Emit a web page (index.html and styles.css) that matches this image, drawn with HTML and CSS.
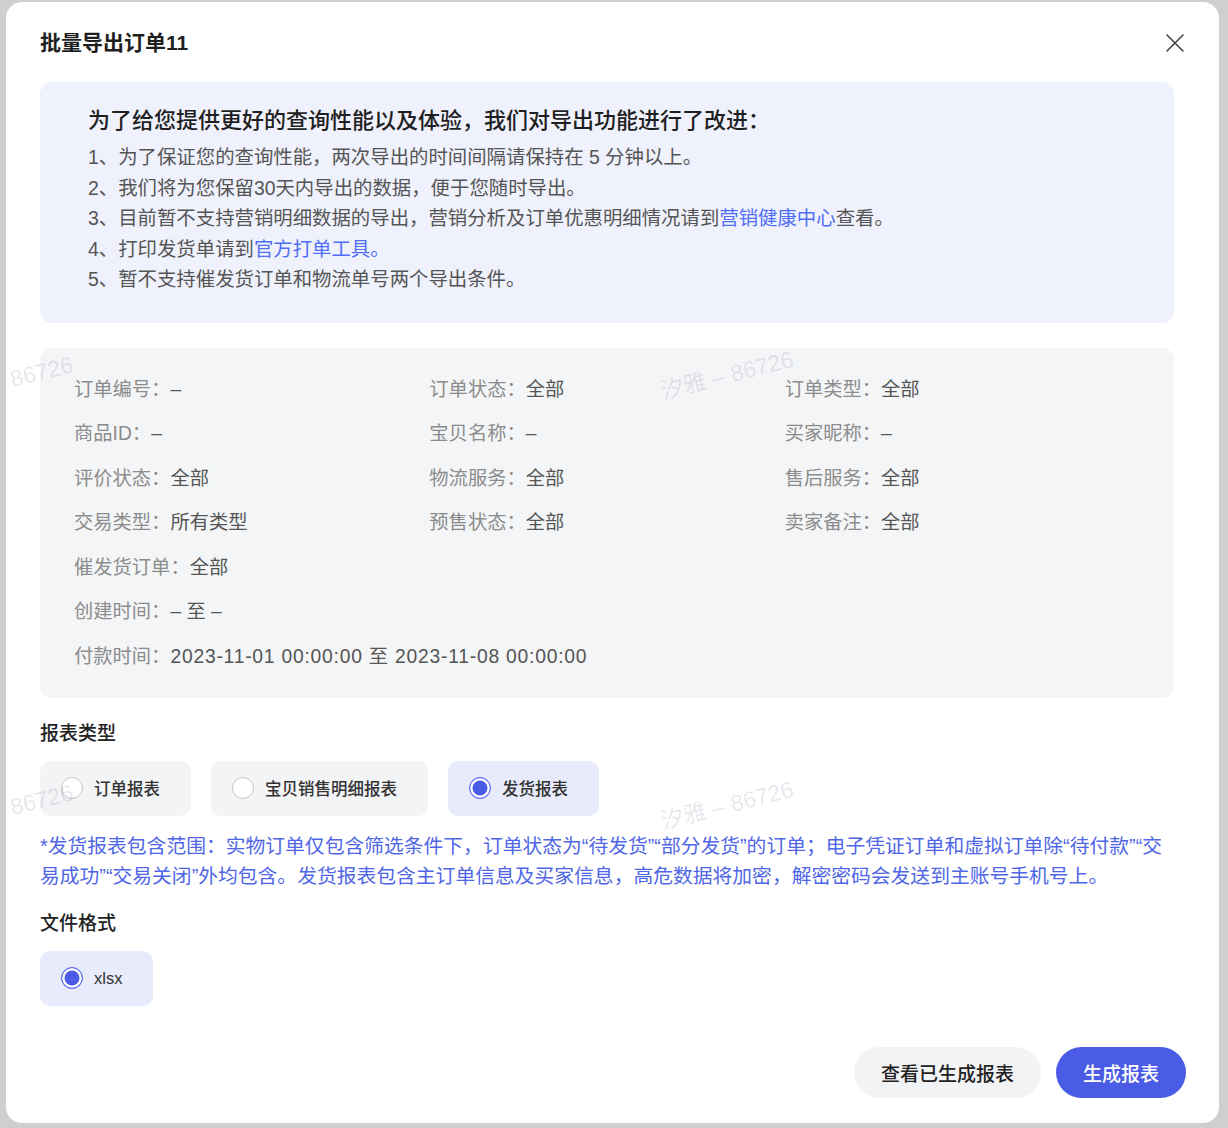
FILE: index.html
```html
<!DOCTYPE html>
<html lang="zh-CN">
<head>
  <meta charset="UTF-8" />
  <title>批量导出订单</title>
  <link rel="stylesheet" href="styles.css">
</head>
<body>
  <div class="modal">

    <!-- Header -->
    <div class="modal-head">
      <div class="modal-title">批量导出订单11</div>
      <span class="close-btn" aria-label="关闭">
        <svg width="20" height="20" viewBox="0 0 20 20">
          <path d="M2 2 L18 18 M18 2 L2 18" stroke="#444" stroke-width="1.6" stroke-linecap="round" fill="none" />
        </svg>
      </span>
    </div>

    <div class="modal-body">
      <!-- Notice -->
      <div class="notice">
        <div class="notice-title">为了给您提供更好的查询性能以及体验，我们对导出功能进行了改进：</div>
        <ul class="notice-list">
          <li>1、为了保证您的查询性能，两次导出的时间间隔请保持在 5 分钟以上。</li>
          <li>2、我们将为您保留30天内导出的数据，便于您随时导出。</li>
          <li>3、目前暂不支持营销明细数据的导出，营销分析及订单优惠明细情况请到<a class="link">营销健康中心</a>查看。</li>
          <li>4、打印发货单请到<a class="link">官方打单工具。</a></li>
          <li>5、暂不支持催发货订单和物流单号两个导出条件。</li>
        </ul>
      </div>

      <!-- Current filters -->
      <div class="filters">
        <div class="f"><span class="k">订单编号：</span><span class="v">–</span></div>
        <div class="f"><span class="k">订单状态：</span><span class="v">全部</span></div>
        <div class="f"><span class="k">订单类型：</span><span class="v">全部</span></div>
        <div class="f"><span class="k">商品ID：</span><span class="v">–</span></div>
        <div class="f"><span class="k">宝贝名称：</span><span class="v">–</span></div>
        <div class="f"><span class="k">买家昵称：</span><span class="v">–</span></div>
        <div class="f"><span class="k">评价状态：</span><span class="v">全部</span></div>
        <div class="f"><span class="k">物流服务：</span><span class="v">全部</span></div>
        <div class="f"><span class="k">售后服务：</span><span class="v">全部</span></div>
        <div class="f"><span class="k">交易类型：</span><span class="v">所有类型</span></div>
        <div class="f"><span class="k">预售状态：</span><span class="v">全部</span></div>
        <div class="f"><span class="k">卖家备注：</span><span class="v">全部</span></div>
        <div class="f wide"><span class="k">催发货订单：</span><span class="v">全部</span></div>
        <div class="f wide"><span class="k">创建时间：</span><span class="v">– 至 –</span></div>
        <div class="f wide"><span class="k">付款时间：</span><span class="v num">2023-11-01 00:00:00 至 2023-11-08 00:00:00</span></div>
      </div>

      <!-- Report type -->
      <div class="section-label">报表类型</div>
      <div class="options">
        <div class="option"><span class="radio"></span>订单报表</div>
        <div class="option"><span class="radio"></span>宝贝销售明细报表</div>
        <div class="option selected"><span class="radio on"></span>发货报表</div>
      </div>
      <p class="tip">*发货报表包含范围：实物订单仅包含筛选条件下，订单状态为“待发货”“部分发货”的订单；电子凭证订单和虚拟订单除“待付款”“交易成功”“交易关闭”外均包含。发货报表包含主订单信息及买家信息，高危数据将加密，解密密码会发送到主账号手机号上。</p>

      <!-- File format -->
      <div class="section-label fmt">文件格式</div>
      <div class="options">
        <div class="option selected"><span class="radio on"></span>xlsx</div>
      </div>
    </div>

    <!-- Footer -->
    <div class="modal-foot">
      <button class="btn">查看已生成报表</button>
      <button class="btn primary">生成报表</button>
    </div>

    <!-- Watermark -->
    <span class="wm" style="left: 8px; top: 364px;">86726</span>
    <span class="wm" style="left: 659px; top: 370px;">汐雅 – 86726</span>
    <span class="wm" style="left: 8px; top: 792px;">86726</span>
    <span class="wm" style="left: 659px; top: 800px;">汐雅 – 86726</span>
  </div>
</body>
</html>
```

FILE: styles.css
```css
body {
  margin: 0;
  padding: 2px 9px 5px 6px;
  background: #cfcfd2;
  font-family: "Liberation Sans", "Noto Sans CJK SC", sans-serif;
  color: #333;
}

.modal {
  position: relative;
  width: 1213px;
  height: 1121px;
  background: #fff;
  border-radius: 16px;
  display: flex;
  flex-direction: column;
  overflow: hidden;
}

/* Header */
.modal-head {
  display: flex;
  justify-content: space-between;
  align-items: center;
  padding: 28px 34px 0 34px;
}

.modal-title {
  font-size: 21px;
  line-height: 26px;
  font-weight: 600;
  color: #1f1f1f;
}

.close-btn {
  display: flex;
  width: 20px;
  height: 20px;
}

.modal-body {
  flex: 1;
  padding: 26px 45px 0 34px;
}

/* Notice box */
.notice {
  background: #eff1fc;
  border-radius: 12px;
  padding: 24px 48px 28px;
}

.notice-title {
  font-size: 22px;
  line-height: 30px;
  font-weight: 500;
  color: #1f1f1f;
}

.notice-list {
  list-style: none;
  margin: 6px 0 0;
  padding: 0;
  font-size: 19.4px;
  line-height: 30.5px;
  color: #555;
}

.link {
  color: #4f6ef5;
  cursor: pointer;
}

/* Filters */
.filters {
  margin-top: 25px;
  background: #f4f5f7;
  border-radius: 12px;
  padding: 29px 34px 28px;
  display: grid;
  grid-template-columns: repeat(3, 1fr);
  row-gap: 18.5px;
  font-size: 19.3px;
  line-height: 26px;
}

.f.wide {
  grid-column: 1 / -1;
}

.k {
  color: #8c8c8c;
}

.v {
  color: #555;
}

.num {
  letter-spacing: 0.04em;
}

/* Report type */
.section-label {
  margin-top: 23px;
  font-size: 19px;
  line-height: 26px;
  font-weight: 500;
  color: #222;
}

.section-label.fmt {
  margin-top: 20px;
}

.options {
  display: flex;
  gap: 20px;
  margin-top: 14px;
}

.option {
  display: flex;
  align-items: center;
  gap: 11px;
  height: 55px;
  padding: 0 31px 0 21px;
  border-radius: 10px;
  background: #f3f4f6;
  font-size: 16.5px;
  font-weight: 500;
  color: #333;
}

.option.selected {
  background: #e8ebfb;
}

.radio {
  width: 22px;
  height: 22px;
  box-sizing: border-box;
  border-radius: 50%;
  border: 1px solid #c4c4c4;
  background: #fff;
}

.radio.on {
  border: 1.5px solid #5a6cf0;
  background: #4a5ce6;
  box-shadow: inset 0 0 0 2.5px #fff;
}

.tip {
  margin: 15px 0 0;
  font-size: 19.8px;
  line-height: 30px;
  color: #4f66e6;
}

/* Footer */
.modal-foot {
  display: flex;
  justify-content: flex-end;
  gap: 15px;
  padding: 0 33px 25px;
}

.btn {
  height: 51px;
  padding: 0 27px;
  border: none;
  border-radius: 26px;
  background: #f2f3f5;
  font-family: inherit;
  font-size: 19px;
  font-weight: 500;
  color: #222;
  cursor: pointer;
}

.btn.primary {
  background: #4a5ce6;
  color: #fff;
}

/* Watermark */
.wm {
  position: absolute;
  font-size: 23px;
  color: rgba(60, 70, 110, 0.13);
  transform: rotate(-14deg);
  transform-origin: left bottom;
  white-space: nowrap;
  pointer-events: none;
}
```
